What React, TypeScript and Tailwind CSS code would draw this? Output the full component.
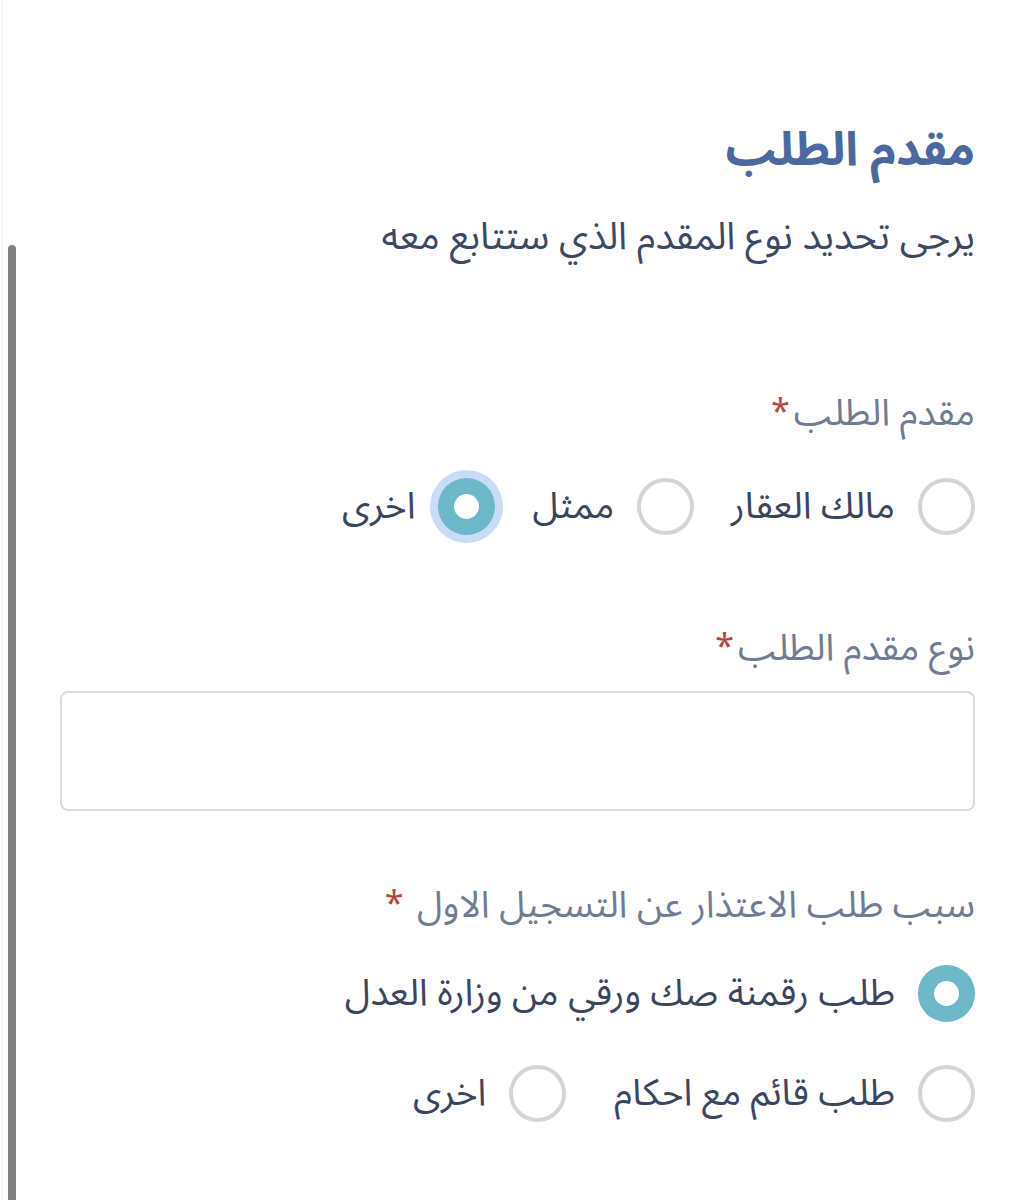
import * as React from "react";

const font = { fontFamily: '"Noto Sans Arabic", "Noto Sans", "DejaVu Sans", sans-serif' };

const Radio = ({ checked, halo }: { checked?: boolean; halo?: boolean }) => {
  if (checked) {
    return (
      <span
        className={`flex items-center justify-center w-[57px] h-[57px] rounded-full bg-[#6cb8c8] shrink-0 ${
          halo ? "ring-[8px] ring-[#c8dcf7]" : ""
        }`}
      >
        <span className="w-[25px] h-[25px] rounded-full bg-white" />
      </span>
    );
  }
  return <span className="w-[57px] h-[57px] rounded-full border-[4px] border-[#d2d4d9] bg-white shrink-0" />;
};

const Option = ({ label, checked, halo }: { label: string; checked?: boolean; halo?: boolean }) => (
  <label className="flex items-center gap-[23px]">
    <Radio checked={checked} halo={halo} />
    <span className="text-[37px] leading-none text-[#3b4560]">{label}</span>
  </label>
);

const FieldLabel = ({ text, spaced }: { text: string; spaced?: boolean }) => (
  <div className="text-[37px] leading-none text-[#707c94]">
    {text}
    {spaced ? " " : ""}
    <span className="text-[#b5473a] align-top text-[34px] ms-[4px]">*</span>
  </div>
);

export default function App() {
  return (
    <div dir="rtl" className="relative w-[1035px] h-[1200px] bg-white overflow-hidden" style={font}>
      {/* screen edge + scrollbar */}
      <div className="absolute left-[2px] top-0 bottom-0 w-px bg-[#efefef]" />
      <div className="absolute left-[8px] top-[245px] bottom-0 w-[8px] rounded-t-full bg-[#808080]" />

      <div className="px-[60px] pt-[127px] flex flex-col">
        <h1 className="text-[47px] font-bold leading-none text-[#4b68a3]">مقدم الطلب</h1>
        <p className="mt-[44px] text-[38px] leading-none text-[#3c4864]">يرجى تحديد نوع المقدم الذي ستتابع معه</p>

        <div className="mt-[139px]">
          <FieldLabel text="مقدم الطلب" />
        </div>
        <div className="mt-[46px] flex items-center gap-[37px]">
          <Option label="مالك العقار" />
          <Option label="ممثل" />
          <Option label="اخرى" checked halo />
        </div>

        <div className="mt-[95px]">
          <FieldLabel text="نوع مقدم الطلب" />
        </div>
        <div className="mt-[24px] h-[120px] w-full rounded-[8px] border-2 border-[#d7dbe0] bg-white" />

        <div className="mt-[76px]">
          <FieldLabel text="سبب طلب الاعتذار عن التسجيل الاول" spaced />
        </div>
        <div className="mt-[41px] flex flex-col gap-[43px]">
          <Option label="طلب رقمنة صك ورقي من وزارة العدل" checked />
          <div className="flex items-center gap-[48px]">
            <Option label="طلب قائم مع احكام" />
            <Option label="اخرى" />
          </div>
        </div>
      </div>
    </div>
  );
}
